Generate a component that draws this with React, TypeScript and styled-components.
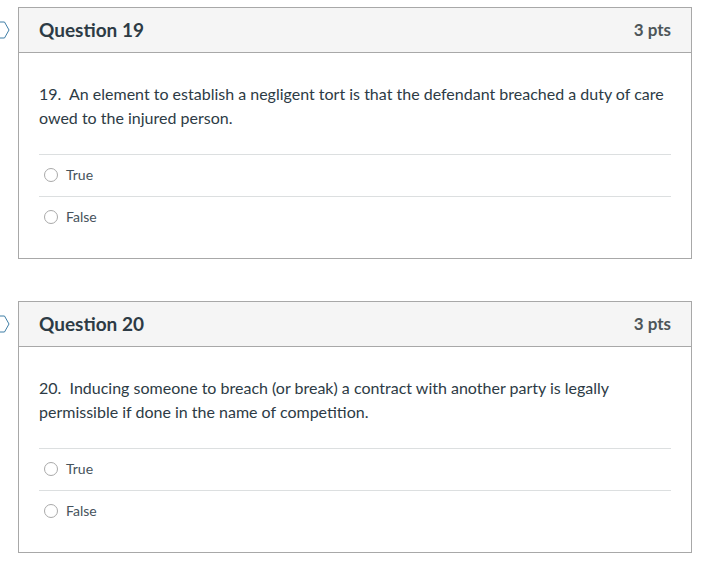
import React from 'react';
import styled, { createGlobalStyle } from 'styled-components';

interface Question {
  id: number;
  points: string;
  text: string;
}

const questions: Question[] = [
  {
    id: 19,
    points: '3 pts',
    text: 'An element to establish a negligent tort is that the defendant breached a duty of care owed to the injured person.',
  },
  {
    id: 20,
    points: '3 pts',
    text: 'Inducing someone to breach (or break) a contract with another party is legally permissible if done in the name of competition.',
  },
];

const GlobalStyle = createGlobalStyle`
  html, body {
    margin: 0;
    padding: 0;
    background: #fff;
    font-family: Lato, "Open Sans", sans-serif;
    color: #2d3b45;
  }
`;

const Page = styled.div`
  display: flex;
  flex-direction: column;
  gap: 42px;
  width: 674px;
  padding: 7px 0 29px 18px;
`;

const Card = styled.section`
  position: relative;
  box-sizing: border-box;
  height: 252px;
  border: 1px solid #a8a8a8;
  background: #fff;
`;

const Flag = styled.svg`
  position: absolute;
  left: -19px;
  top: 13px;
  width: 10px;
  height: 18px;
  fill: #fff;
  stroke: #3f7ea6;
  stroke-width: 1;
`;

const Header = styled.header`
  box-sizing: border-box;
  display: flex;
  align-items: center;
  justify-content: space-between;
  height: 45px;
  padding: 0 20px 2px;
  background: #f5f5f5;
  border-bottom: 1px solid #a8a8a8;
`;

const Title = styled.h2`
  margin: 0;
  font-size: 19px;
  font-weight: 700;
  color: #2d3b45;
  font-variant-ligatures: common-ligatures discretionary-ligatures;
`;

const Points = styled.div`
  font-size: 17px;
  font-weight: 700;
  color: #4d5559;
`;

const Body = styled.div`
  padding: 29px 20px 0;
`;

const Prompt = styled.p`
  margin: 0 0 24px;
  font-size: 16px;
  line-height: 24px;
  color: #2d3b45;
  white-space: pre-wrap;
`;

const Answer = styled.label`
  box-sizing: border-box;
  display: flex;
  align-items: center;
  gap: 8px;
  height: 42px;
  padding: 0 0 2px 5px;
  border-top: 1px solid #dcdfe0;
  font-size: 14px;
  color: #46535c;
`;

const Radio = styled.span`
  box-sizing: border-box;
  width: 14px;
  height: 14px;
  border: 1px solid #a9a9a9;
  border-radius: 50%;
  background: #fff;
`;

const App: React.FC = () => (
  <>
    <GlobalStyle />
    <Page>
      {questions.map((question) => (
        <Card key={question.id}>
          <Flag viewBox="0 0 10 18">
            <path d="M-4 1 H4.5 L9 9 L4.5 17 H-4 Z" />
          </Flag>
          <Header>
            <Title>Question {question.id}</Title>
            <Points>{question.points}</Points>
          </Header>
          <Body>
            <Prompt>{`${question.id}.  ${question.text}`}</Prompt>
            {['True', 'False'].map((answer) => (
              <Answer key={answer}>
                <Radio />
                {answer}
              </Answer>
            ))}
          </Body>
        </Card>
      ))}
    </Page>
  </>
);

export default App;
